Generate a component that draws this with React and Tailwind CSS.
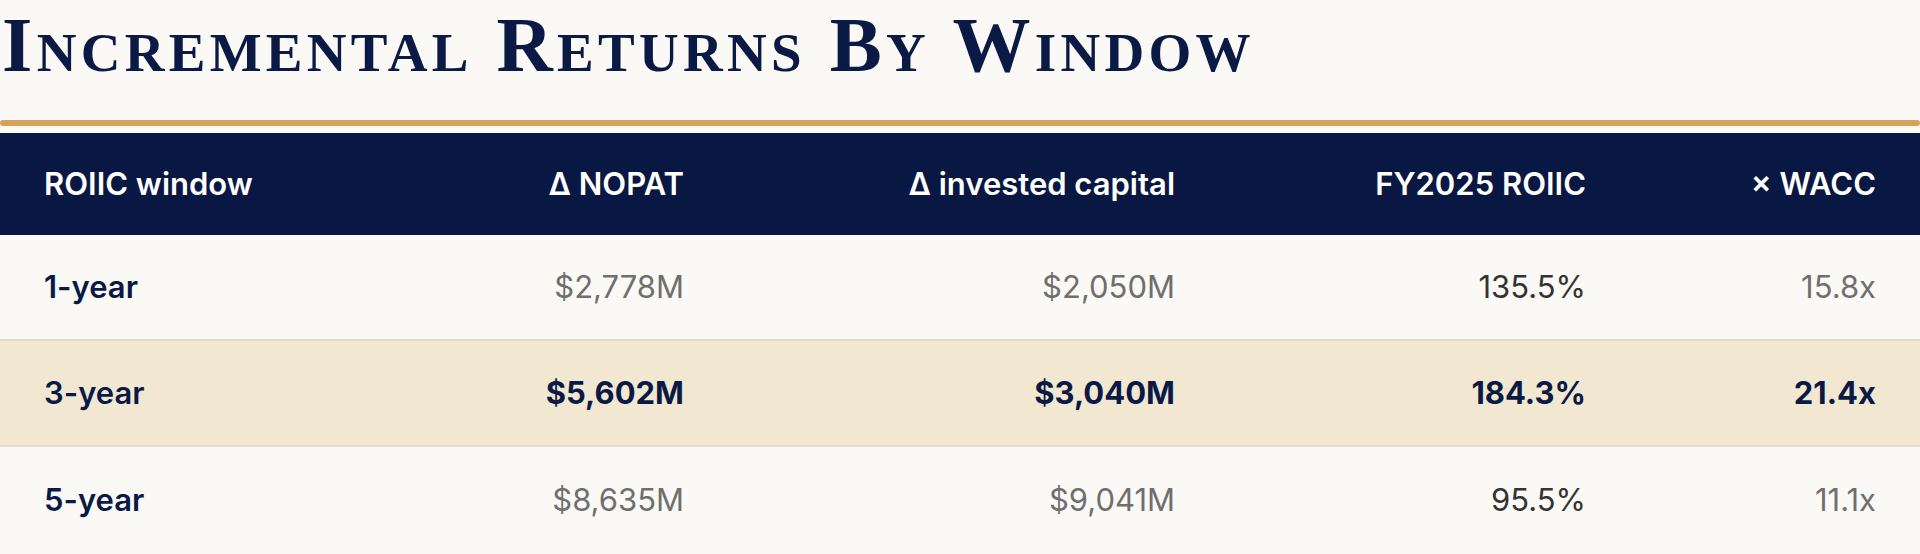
import React from 'react';

const rows = [
  { window: '1-year', nopat: '$2,778M', capital: '$2,050M', roiic: '135.5%', wacc: '15.8x' },
  { window: '3-year', nopat: '$5,602M', capital: '$3,040M', roiic: '184.3%', wacc: '21.4x', highlight: true },
  { window: '5-year', nopat: '$8,635M', capital: '$9,041M', roiic: '95.5%', wacc: '11.1x' },
];

const cols = 'grid grid-cols-[364px_364px_491px_411px_1fr]';

const App = () => {
  return (
    <div className="min-h-screen bg-[#faf9f5] font-['Inter',sans-serif]">
      {/* Title */}
      <h1 className="h-[120px] pl-[2px] pt-[2px] text-[#0a1a45] font-['Liberation_Serif',serif] font-bold text-[78px] leading-[86px] [font-variant:small-caps] tracking-[0.055em]">
        Incremental Returns By Window
      </h1>
      <div className="h-[6px] rounded-full bg-[#d4a25c]" />

      {/* Table */}
      <div className="mt-[7px]">
        <div className={`${cols} h-[102px] items-center bg-[#091842] text-white font-semibold text-[31px]`}>
          <div className="px-[44px]">ROIIC window</div>
          <div className="px-[44px] text-right">Δ NOPAT</div>
          <div className="px-[44px] text-right">Δ invested capital</div>
          <div className="px-[44px] text-right">FY2025 ROIIC</div>
          <div className="px-[44px] text-right">× WACC</div>
        </div>

        {rows.map((row, i) => (
          <div
            key={row.window}
            className={`${cols} h-[106px] items-center text-[31px] ${
              i < rows.length - 1 ? 'border-b-2 border-[#e3dccf]' : ''
            } ${row.highlight ? 'bg-[#f2e8d1] font-bold text-[#0a1a45]' : ''}`}
          >
            <div className="px-[44px] font-semibold text-[#0a1a45]">{row.window}</div>
            <div className={`px-[44px] text-right ${row.highlight ? '' : 'text-[#6f6f6f]'}`}>{row.nopat}</div>
            <div className={`px-[44px] text-right ${row.highlight ? '' : 'text-[#6f6f6f]'}`}>{row.capital}</div>
            <div className={`px-[44px] text-right ${row.highlight ? '' : 'text-[#333333]'}`}>{row.roiic}</div>
            <div className={`px-[44px] text-right ${row.highlight ? '' : 'text-[#6f6f6f]'}`}>{row.wacc}</div>
          </div>
        ))}
      </div>
    </div>
  );
};

export default App;
